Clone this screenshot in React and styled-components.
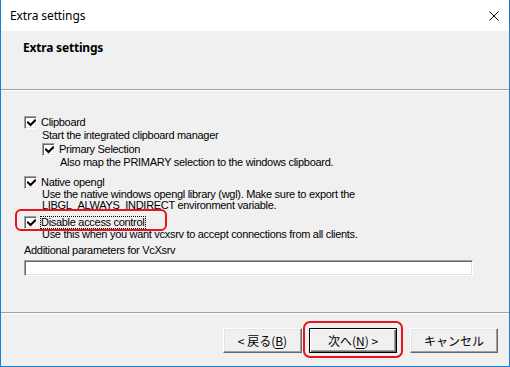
import React from 'react'
import styled, { createGlobalStyle } from 'styled-components'

const colors = {
  face: '#f0f0f0',
  accent: '#1a7fd4',
  shadow: '#a0a0a0',
  darkShadow: '#696969',
  light: '#e3e3e3',
  red: '#e8141c',
}

const GlobalStyle = createGlobalStyle`
  body {
    margin: 0;
    background: #ffffff;
  }
`

const uiFont = `"Liberation Sans", Arial, sans-serif`
const titleFont = `"Noto Sans", "Open Sans", sans-serif`
const jpFont = `"Noto Sans CJK JP", "Noto Sans", sans-serif`

function CheckMark() {
  return (
    <svg width="9" height="9" viewBox="0 0 9 9">
      <path d="M1 3.5 L3.5 6 L8 1.5" fill="none" stroke="#000" strokeWidth="2" strokeLinecap="square" />
    </svg>
  )
}

function CloseIcon() {
  return (
    <svg width="10" height="10" viewBox="0 0 10 10">
      <path d="M0.5 0.5 L9.5 9.5 M9.5 0.5 L0.5 9.5" stroke="#000" strokeWidth="1" />
    </svg>
  )
}

function Option({ label, focused, marked, children, indent }) {
  return (
    <OptionBlock $indent={indent}>
      <CheckRow>
        <CheckBox><CheckMark /></CheckBox>
        <CheckLabel $focused={focused}>{label}</CheckLabel>
        {marked && <RedMark />}
      </CheckRow>
      {children}
    </OptionBlock>
  )
}

function App() {
  return (
    <>
      <GlobalStyle />
      <Window>
        <TitleBar>
          <TitleText>Extra settings</TitleText>
          <CloseIcon />
        </TitleBar>
        <Header>
          <HeaderTitle>Extra settings</HeaderTitle>
        </Header>
        <Body>
          <Option label="Clipboard">
            <Desc>Start the integrated clipboard manager</Desc>
            <Option label="Primary Selection" indent>
              <Desc>Also map the PRIMARY selection to the windows clipboard.</Desc>
            </Option>
          </Option>
          <Spacer $h={8} />
          <Option label="Native opengl">
            <Desc $lh={11}>Use the native windows opengl library (wgl). Make sure to export the</Desc>
            <Desc $lh={11}>LIBGL_ALWAYS_INDIRECT environment variable.</Desc>
          </Option>
          <Spacer $h={5} />
          <Option label="Disable access control" focused marked>
            <Desc $lh={10}>Use this when you want vcxsrv to accept connections from all clients.</Desc>
          </Option>
          <FieldLabel>Additional parameters for VcXsrv</FieldLabel>
          <TextField />
        </Body>
        <Footer>
          <Button $w={79}>&lt; 戻る(<u>B</u>)</Button>
          <NextWrap>
            <Button $w={88} $default>次へ(<u>N</u>) &gt;</Button>
            <RedButtonMark />
          </NextWrap>
          <Button $w={88}>キャンセル</Button>
        </Footer>
      </Window>
    </>
  )
}

export default App

const Window = styled.div`
  width: 510px;
  height: 367px;
  box-sizing: border-box;
  border: 1px solid ${colors.accent};
  border-top: none;
  display: flex;
  flex-direction: column;
  background: ${colors.face};
  overflow: hidden;
`

const TitleBar = styled.div`
  height: 31px;
  flex: none;
  background: #ffffff;
  display: flex;
  align-items: center;
  justify-content: space-between;
  padding: 0 10px 0 9px;
  box-sizing: border-box;
`

const TitleText = styled.div`
  font-family: ${titleFont};
  font-size: 12px;
  color: #000;
  letter-spacing: -0.1px;
`

const Header = styled.div`
  height: 60px;
  flex: none;
  box-sizing: border-box;
  padding: 10px 0 0 22px;
  border-bottom: 1px solid #ffffff;
  box-shadow: inset 0 -1px 0 ${colors.shadow};
`

const HeaderTitle = styled.div`
  font-family: ${titleFont};
  font-size: 12px;
  font-weight: 700;
  line-height: 14px;
  color: #000;
  letter-spacing: -0.2px;
`

const Body = styled.div`
  flex: 1;
  padding: 25px 0 0 23px;
  display: flex;
  flex-direction: column;
  font-family: ${uiFont};
  font-size: 11px;
  letter-spacing: -0.3px;
  color: #000;
`

const Spacer = styled.div`
  height: ${(p) => p.$h}px;
  flex: none;
`

const OptionBlock = styled.div`
  display: flex;
  flex-direction: column;
  margin-top: ${(p) => (p.$indent ? 2 : 0)}px;
  margin-left: ${(p) => (p.$indent ? 18 : 0)}px;
`

const CheckRow = styled.div`
  position: relative;
  display: flex;
  align-items: center;
  height: 13px;
`

const CheckBox = styled.div`
  width: 13px;
  height: 13px;
  box-sizing: border-box;
  flex: none;
  background: #ffffff;
  border-style: solid;
  border-width: 1px;
  border-color: ${colors.shadow} #ffffff #ffffff ${colors.shadow};
  box-shadow: inset 1px 1px 0 ${colors.darkShadow}, inset -1px -1px 0 ${colors.light};
  display: flex;
  align-items: center;
  justify-content: center;
  padding: 1px 0 0 1px;
`

const CheckLabel = styled.span`
  margin-left: ${(p) => (p.$focused ? 3 : 4)}px;
  line-height: 11px;
  padding: 0 ${(p) => (p.$focused ? 1 : 0)}px 0 0;
  border: ${(p) => (p.$focused ? '1px dotted #000' : 'none')};
  white-space: nowrap;
  position: relative;
  z-index: 1;
`

const RedMark = styled.div`
  position: absolute;
  left: -9px;
  top: -7px;
  width: 148px;
  height: 18px;
  border: 2px solid ${colors.red};
  border-radius: 6px;
  z-index: 2;
`

const Desc = styled.div`
  margin-left: 18px;
  line-height: ${(p) => p.$lh || 12}px;
  white-space: nowrap;
`

const FieldLabel = styled.div`
  margin-top: 5px;
  line-height: 12px;
  white-space: nowrap;
`

const TextField = styled.div`
  margin-top: 4px;
  width: 449px;
  height: 16px;
  box-sizing: border-box;
  background: #ffffff;
  border-style: solid;
  border-width: 1px;
  border-color: ${colors.shadow} #ffffff #ffffff ${colors.shadow};
  box-shadow: inset 1px 1px 0 ${colors.darkShadow}, inset -1px -1px 0 ${colors.light};
`

const Footer = styled.div`
  height: 54px;
  flex: none;
  box-sizing: border-box;
  border-top: 1px solid ${colors.shadow};
  box-shadow: inset 0 1px 0 #ffffff;
  display: flex;
  justify-content: flex-end;
  align-items: flex-start;
  padding: 15px 11px 0 0;
  gap: 7px;
`

const NextWrap = styled.div`
  position: relative;
  margin-right: 6px;
`

const Button = styled.div`
  width: ${(p) => p.$w}px;
  height: 25px;
  box-sizing: border-box;
  display: flex;
  align-items: center;
  justify-content: center;
  font-family: ${jpFont};
  font-size: 12px;
  color: #000;
  background: ${colors.face};
  border: 1px solid;
  border-color: ${(p) => (p.$default ? '#000' : '#ffffff #696969 #696969 #ffffff')};
  box-shadow: ${(p) =>
    p.$default
      ? `inset 1px 1px 0 #ffffff, inset -1px -1px 0 #696969, inset -2px -2px 0 ${colors.shadow}`
      : `inset -1px -1px 0 ${colors.shadow}, inset 1px 1px 0 ${colors.light}`};
  u {
    text-decoration: underline;
    text-underline-offset: 2px;
  }
`

const RedButtonMark = styled.div`
  position: absolute;
  left: -6px;
  top: -7px;
  width: 100px;
  height: 37px;
  border: 2px solid ${colors.red};
  border-radius: 7px;
  box-sizing: border-box;
`
